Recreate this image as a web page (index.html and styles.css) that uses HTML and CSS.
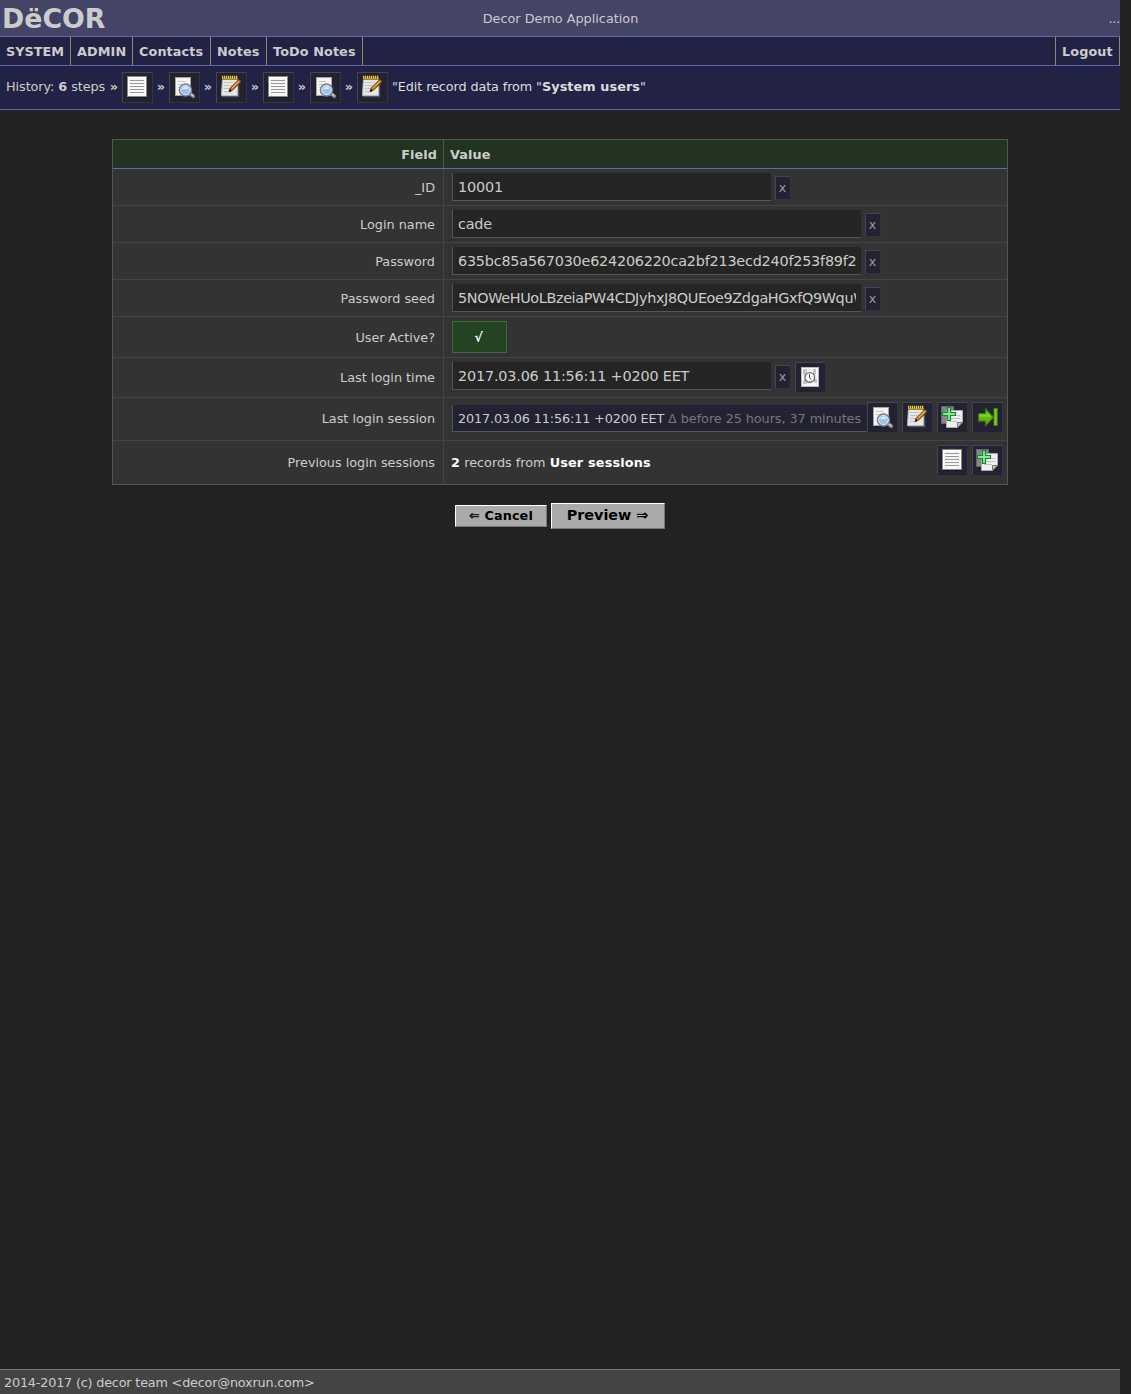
FILE: index.html
```html
<!DOCTYPE html>
<html lang="en">
<head>
<meta charset="utf-8">
<title>Decor Demo Application</title>
<link rel="stylesheet" href="styles.css">
</head>
<body>
<svg class="defs" width="0" height="0">
  <defs>
    <symbol id="list" viewBox="0 0 29 29">
      <path d="M5 24.5h19" stroke="#111" opacity=".6"/>
      <rect x="4.5" y="3.5" width="19" height="20" fill="#f7f7f6" stroke="#888"/>
      <path d="M5.5 22.5V4.5h17v18" fill="none" stroke="#fff"/>
      <path d="M7 7.5h14M7 10.5h14M7 13.5h14M7 16.5h14M7 19.5h14" stroke="#999"/>
    </symbol>
    <symbol id="view" viewBox="0 0 29 29">
      <rect x="5.5" y="4.5" width="15" height="18" fill="#f4f4f2" stroke="#aaa69c"/>
      <path d="M8 8.5h7M8 11.5h9M8 14.5h8M8 17.5h5" stroke="#c4c4c4"/>
      <path d="M20 20.5l3.3 2.7" stroke="#777" stroke-width="4" stroke-linecap="round"/>
      <path d="M20.3 20.7l2.8 2.2" stroke="#ccc" stroke-width="1.6" stroke-linecap="round"/>
      <circle cx="15.5" cy="17" r="6" fill="#9fc4ee" stroke="#777f8a" stroke-width="1.4"/>
      <circle cx="15.5" cy="17" r="4.7" fill="#9bc1ee" stroke="#d8e7f8"/>
      <path d="M12.5 16.5c0-3 4-4 6-1.5-1 2-4 .5-6 1.5z" fill="#dcebfc"/>
    </symbol>
    <symbol id="edit" viewBox="0 0 29 29">
      <path d="M5 23.5h16.5V7" fill="none" stroke="#555" stroke-width="1.4"/>
      <path d="M5.5 5.5h15v17h-16z" fill="#e6e6e6" stroke="#bbb"/>
      <path d="M7 9.5h9M7 12.5h8M7 15.5h6M7 18.5h5" stroke="#c2c2c2"/>
      <path d="M5 6h16" stroke="#77580a" stroke-width="1.4"/>
      <path d="M5 4.2h16" stroke="#f0cf28" stroke-width="3" stroke-dasharray="1.3 .7"/>
      <path d="M12 18.8l1.2-3.7 8-8c1.4-1 3.2.3 2.3 2.1l-8 8z" fill="#b5741c" stroke="#67400e"/>
      <path d="M14.8 15.3l7.2-7.2" stroke="#e3b368" stroke-width="1.2"/>
      <path d="M12 18.8l.9-2.7 1.8 1.6z" fill="#111"/>
    </symbol>
    <symbol id="copy" viewBox="0 0 29 29">
      <path d="M3.5 3.5h12v17h-12z" fill="#858589" stroke="#66666d"/>
      <path d="M8.5 7.5h16v12l-5 5h-11z" fill="#efefef" stroke="#aaa"/>
      <path d="M11 12.5h11M11 15.5h11M11 18.5h8" stroke="#c4c4c4"/>
      <path d="M19.5 24v-4.5h4.7z" fill="#ccc" stroke="#777"/>
      <path d="M9.5 4.5h3v5h5v3h-5v5h-3v-5h-5v-3h5z" fill="#8ee69b" stroke="#128c2a" stroke-width="1.2"/>
    </symbol>
    <symbol id="go" viewBox="0 0 29 29">
      <path d="M5.5 10.5h7V5.8l8 8.5-8 8.5v-4.6h-7z" fill="#69b512" stroke="#3b7a08" stroke-width="1.2"/>
      <path d="M6.5 11.5h7V8.5l5 5.3h-12z" fill="#86cf28"/>
      <rect x="21" y="5.5" width="3.2" height="17" fill="#84c92c" stroke="#3f8a08"/>
    </symbol>
    <symbol id="clock" viewBox="0 0 29 29">
      <rect x="5.5" y="4.5" width="17" height="19" fill="#f8f8f8" stroke="#bbb"/>
      <path d="M7 6h4v6H7zM17 6h3v5h-3zM7 17h4v4H7zM18 16h3v4h-3z" fill="#c4c4c4"/>
      <circle cx="13.8" cy="14.4" r="4.8" fill="#fff" stroke="#666" stroke-width="1.4"/>
      <path d="M13.5 11v3.5l1.4 2" fill="none" stroke="#444"/>
    </symbol>
  </defs>
</svg>

<header class="banner">
  <div class="logo">DëCOR</div>
  <div class="app-name">Decor Demo Application</div>
  <div class="more">...</div>
</header>
<nav class="menu">
  <a class="m-system">SYSTEM</a><a class="m-admin">ADMIN</a><a class="m-contacts">Contacts</a><a class="m-notes">Notes</a><a class="m-todo">ToDo Notes</a><a class="logout">Logout</a>
</nav>
<div class="history">
  <span class="steps">History: <b>6</b> steps</span><b class="sep">»</b>
  <a class="icon"><svg><use href="#list"/></svg></a><b class="sep">»</b>
  <a class="icon"><svg><use href="#view"/></svg></a><b class="sep">»</b>
  <a class="icon"><svg><use href="#edit"/></svg></a><b class="sep">»</b>
  <a class="icon"><svg><use href="#list"/></svg></a><b class="sep">»</b>
  <a class="icon"><svg><use href="#view"/></svg></a><b class="sep">»</b>
  <a class="icon"><svg><use href="#edit"/></svg></a>
  <span class="here">"Edit record data from "<b>System users</b>"</span>
</div>

<main>
  <form class="record">
    <div class="row head"><div class="label">Field</div><div class="value">Value</div></div>
    <div class="row"><label class="label">_ID</label><div class="value"><input class="short" value="10001"><a class="clear">x</a></div></div>
    <div class="row"><label class="label">Login name</label><div class="value"><input value="cade"><a class="clear">x</a></div></div>
    <div class="row"><label class="label">Password</label><div class="value"><input value="635bc85a567030e624206220ca2bf213ecd240f253f89f2"><a class="clear">x</a></div></div>
    <div class="row"><label class="label">Password seed</label><div class="value"><input class="seed" value="5NOWeHUoLBzeiaPW4CDJyhxJ8QUEoe9ZdgaHGxfQ9WquW"><a class="clear">x</a></div></div>
    <div class="row active"><label class="label">User Active?</label><div class="value"><span class="check">√</span></div></div>
    <div class="row time"><label class="label">Last login time</label><div class="value"><input class="short" value="2017.03.06 11:56:11 +0200 EET"><a class="clear">x</a><a class="icon"><svg><use href="#clock"/></svg></a></div></div>
    <div class="row session"><label class="label">Last login session</label><div class="value"><div class="link-box">2017.03.06 11:56:11 +0200 EET <span>Δ before 25 hours, 37 minutes</span></div><div class="tools"><a class="icon"><svg><use href="#view"/></svg></a><a class="icon"><svg><use href="#edit"/></svg></a><a class="icon"><svg><use href="#copy"/></svg></a><a class="icon"><svg><use href="#go"/></svg></a></div></div></div>
    <div class="row previous"><label class="label">Previous login sessions</label><div class="value"><div class="count"><b>2</b> records from <b>User sessions</b></div><div class="tools"><a class="icon"><svg><use href="#list"/></svg></a><a class="icon"><svg><use href="#copy"/></svg></a></div></div></div>
  </form>
  <div class="actions"><a class="button cancel">⇐ Cancel</a><a class="button preview">Preview ⇒</a></div>
</main>
<footer>2014-2017 (c) decor team &lt;decor@noxrun.com&gt;</footer>
</body>
</html>
```
FILE: styles.css
```css
* { box-sizing: border-box; }
body {
  margin: 0;
  width: 1120px;
  height: 1394px;
  display: flex;
  flex-direction: column;
  font: 12.8px/16px "DejaVu Sans", sans-serif;
  color: #ccc;
}
html { background: #222; }
.defs { display: none; }
svg { display: block; }

.banner {
  display: grid;
  grid-template-columns: 1fr auto 1fr;
  align-items: center;
  height: 37px;
  padding-top: 1px;
  background: #446;
  border-bottom: 1px solid #66a;
}
.logo { padding-left: 2px; font-size: 26.8px; line-height: 35px; font-weight: bold; }
.app-name { padding: 1px 0 0 1px; }
.more { padding-top: 1px; text-align: right; letter-spacing: -.2px; }

.menu {
  display: flex;
  height: 29px;
  background: #224;
  border-bottom: 1px solid #66a;
  font-weight: bold;
}
.menu a { padding: 7px 0 0 6px; border-right: 1px solid #887; white-space: nowrap; letter-spacing: .1px; }
.menu .m-system { width: 71px; letter-spacing: 0; }
.m-admin { width: 62px; }
.m-contacts { width: 78px; }
.m-notes { width: 56px; }
.m-todo { width: 96px; }
.menu .logout { width: 65px; margin-left: auto; border-left: 1px solid #887; }

.history {
  display: flex;
  align-items: center;
  height: 44px;
  padding-bottom: 1px;
  background: #224;
  border-bottom: 1px solid #66a;
}
.steps { width: 106px; padding-left: 6px; white-space: nowrap; letter-spacing: -.07px; }
.sep { width: 16px; text-align: center; }
.history .icon { height: 31px; border-color: #445 #334 #334 #445; background: #223; }
.here { margin-left: 4px; white-space: nowrap; color: #ddd; letter-spacing: -.1px; }
.here b { letter-spacing: .08px; }
.icon {
  flex: none;
  width: 31px;
  height: 30px;
  overflow: hidden;
  background: #223;
  border: 1px solid;
  border-color: #445 #334 #223 #445;
}
.icon svg { width: 29px; height: 29px; }

main { flex: 1; padding-top: 29px; }
.record {
  width: 896px;
  margin: 0 auto;
  border: 1px solid #555;
  border-bottom: 0;
}
.row {
  display: grid;
  grid-template-columns: 331px 1fr;
  height: 37px;
  background: #333;
  border-bottom: 1px solid #444;
}
.label { display: flex; align-items: center; justify-content: flex-end; padding: 2px 8px 0 0; border-right: 1px solid #444; }
.value { display: flex; align-items: flex-start; padding: 4px 4px 0 8px; }
.head { height: 29px; background: #232; border-bottom-color: #66a; font-weight: bold; letter-spacing: .1px; }
.head .label { padding-right: 6px; border-right-color: #555; }
.head .value { align-items: center; padding: 2px 0 0 6px; }
.active { height: 41px; }
.time { height: 40px; }
.session { height: 43px; }
.previous { height: 44px; border-bottom-color: #555; }
.time .label, .session .label, .previous .label { padding-top: 0; }

input {
  width: 409px;
  height: 28px;
  margin: 0;
  padding: 0 5px;
  border: 0 solid #555;
  border-width: 0 0 1px 1px;
  border-radius: 0;
  background: #252525;
  color: #ccc;
  font: 14.4px "DejaVu Sans", sans-serif;
  letter-spacing: -.22px;
  outline: none;
}
.short { width: 319px; letter-spacing: -.18px; }
.seed { letter-spacing: -.36px; }
.clear {
  width: 16px;
  height: 24px;
  margin: 3px 0 0 4px;
  padding: 3px 1px 0 0;
  text-align: center;
  font-size: 12.8px;
  color: #999;
  background: #223;
  border: 1px solid;
  border-color: #445 #334 #334 #445;
}
.clear + .icon { margin-left: 4px; }
.check {
  width: 55px;
  height: 32px;
  padding: 8px 2px 0 0;
  text-align: center;
  font-weight: bold;
  color: #fff;
  background: #242;
  border: 1px solid #464;
}
.link-box {
  width: 415px;
  height: 27px;
  margin-top: 3px;
  padding: 6px 0 0 5px;
  white-space: nowrap;
  letter-spacing: -.14px;
  background: #223;
  border: 0 solid #555;
  border-width: 0 0 1px 1px;
}
.link-box span { color: #777; letter-spacing: -.06px; }
.tools { display: flex; gap: 4px; margin-left: auto; }
.count { margin: 10px 0 0 -1px; }
.count b { color: #fff; letter-spacing: .18px; }

.actions { display: flex; justify-content: center; align-items: center; gap: 4px; margin-top: 18px; }
.button {
  display: flex;
  align-items: center;
  justify-content: center;
  white-space: pre;
  color: #000;
  background: #aaa;
  border: 1px solid;
  border-color: #fff #777 #777 #fff;
  font-weight: bold;
}
.cancel { width: 92px; height: 22px; letter-spacing: .1px; }
.preview { width: 114px; height: 26px; padding: 0 1px 2px 0; font-size: 14.4px; letter-spacing: -.05px; }

footer { height: 25px; padding: 5px 4px 0; background: #444; border-top: 1px solid #777; letter-spacing: -.19px; }
```
